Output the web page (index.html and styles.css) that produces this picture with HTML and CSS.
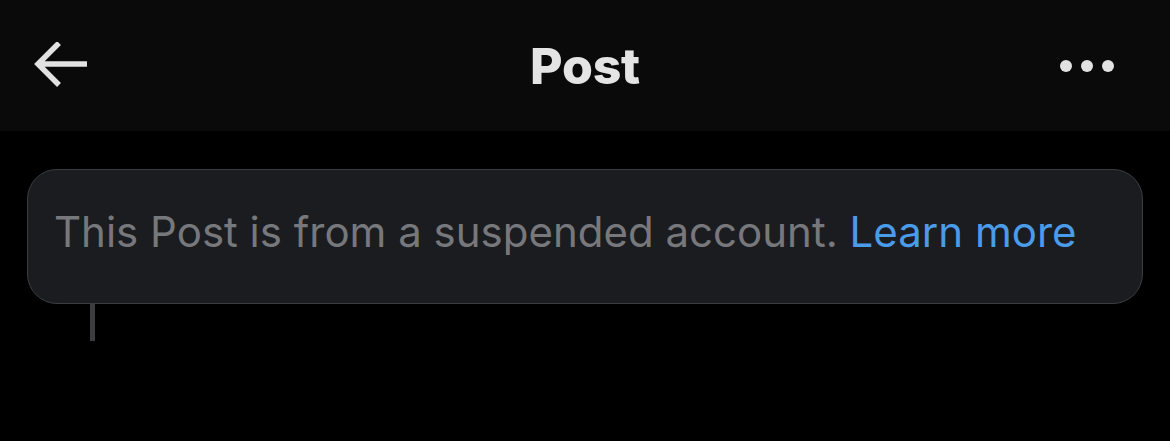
FILE: index.html
```html
<!DOCTYPE html>
<html lang="en">
<head>
  <meta charset="UTF-8">
  <meta name="viewport" content="width=device-width, initial-scale=1.0">
  <title>Post</title>
  <link rel="stylesheet" href="styles.css">
</head>
<body>
  <header class="topbar">
    <button class="icon-btn back" aria-label="Back">
      <svg width="54" height="48" viewBox="0 0 54 48">
        <path d="M4 22 H53 M25 1 L4 22 L25 43" fill="none" stroke="#e2e2e2" stroke-width="5.5" stroke-linejoin="miter"/>
      </svg>
    </button>
    <h1 class="title">Post</h1>
    <button class="icon-btn more" aria-label="More">
      <span class="dot"></span><span class="dot"></span><span class="dot"></span>
    </button>
  </header>

  <main class="thread">
    <div class="notice">
      <p>This Post is from a suspended account. <a href="#">Learn more</a></p>
    </div>
    <div class="reply-line"></div>
  </main>
</body>
</html>
```

FILE: styles.css
```css
body {
  margin: 0;
  background-color: #000;
  font-family: Inter, 'Noto Sans', sans-serif;
  color: #e7e7e7;
  height: 441px;
  overflow: hidden;
}
.topbar {
  height: 131px;
  background-color: #0a0a0a;
  display: flex;
  align-items: center;
  justify-content: space-between;
  padding: 0 56px 0 34px;
}
.icon-btn {
  background: none;
  border: none;
  padding: 0;
  display: flex;
  align-items: center;
  cursor: pointer;
}
.back svg {
  display: block;
}
.title {
  margin: 0 0 0 22px;
  font-size: 50px;
  font-weight: 800;
  color: #e4e4e4;
  letter-spacing: -0.2px;
}
.more {
  gap: 9px;
}
.dot {
  width: 12px;
  height: 12px;
  border-radius: 50%;
  background-color: #e2e2e2;
}
.thread {
  padding: 38px 27px 0 27px;
}
.notice {
  background-color: #1b1c1f;
  border: 1px solid #3c3d40;
  border-radius: 30px;
  height: 133px;
  display: flex;
  align-items: center;
  padding: 0 26px;
}
.notice p {
  margin: 0 0 10px 0;
  font-size: 42px;
  color: #77787c;
}
.notice a {
  color: #4a9be9;
  text-decoration: none;
}
.reply-line {
  width: 5px;
  height: 37px;
  margin-left: 63px;
  background-color: #3d3d3f;
}
```
